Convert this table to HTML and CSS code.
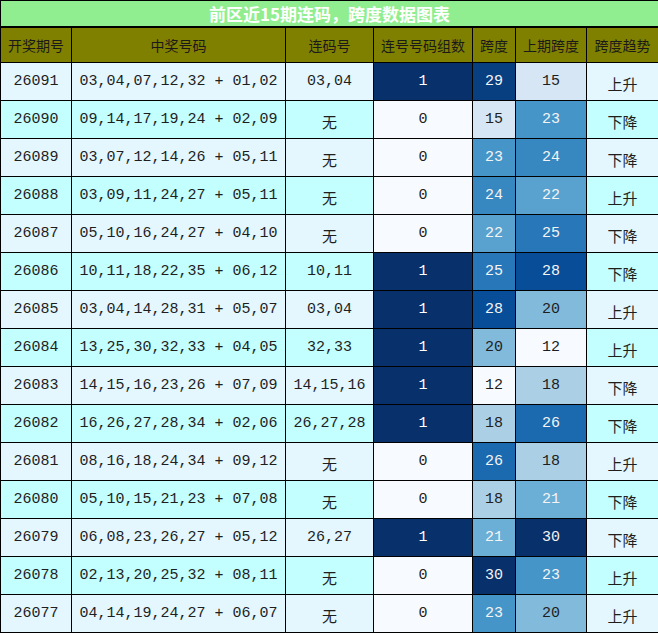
FILE: index.html
```html
<!DOCTYPE html>
<html lang="zh">
<head>
<meta charset="utf-8">
<title>前区近15期连码，跨度数据图表</title>
<link rel="stylesheet" href="styles.css">
</head>
<body>
<table class="chart">
  <colgroup>
    <col class="c-issue"><col class="c-nums"><col class="c-lian"><col class="c-groups"><col class="c-span"><col class="c-prev"><col class="c-trend">
  </colgroup>
  <thead>
    <tr><th class="title" colspan="7">前区近15期连码，跨度数据图表</th></tr>
    <tr class="head">
      <th>开奖期号</th><th>中奖号码</th><th>连码号</th><th>连号号码组数</th><th>跨度</th><th>上期跨度</th><th>跨度趋势</th>
    </tr>
  </thead>
  <tbody>
    <tr class="r-a"><td>26091</td><td>03,04,07,12,32 + 01,02</td><td>03,04</td><td class="g1">1</td><td class="h29">29</td><td class="h15">15</td><td class="cjk">上升</td></tr>
    <tr class="r-b"><td>26090</td><td>09,14,17,19,24 + 02,09</td><td class="cjk">无</td><td class="g0">0</td><td class="h15">15</td><td class="h23">23</td><td class="cjk">下降</td></tr>
    <tr class="r-a"><td>26089</td><td>03,07,12,14,26 + 05,11</td><td class="cjk">无</td><td class="g0">0</td><td class="h23">23</td><td class="h24">24</td><td class="cjk">下降</td></tr>
    <tr class="r-b"><td>26088</td><td>03,09,11,24,27 + 05,11</td><td class="cjk">无</td><td class="g0">0</td><td class="h24">24</td><td class="h22">22</td><td class="cjk">上升</td></tr>
    <tr class="r-a"><td>26087</td><td>05,10,16,24,27 + 04,10</td><td class="cjk">无</td><td class="g0">0</td><td class="h22">22</td><td class="h25">25</td><td class="cjk">下降</td></tr>
    <tr class="r-b"><td>26086</td><td>10,11,18,22,35 + 06,12</td><td>10,11</td><td class="g1">1</td><td class="h25">25</td><td class="h28">28</td><td class="cjk">下降</td></tr>
    <tr class="r-a"><td>26085</td><td>03,04,14,28,31 + 05,07</td><td>03,04</td><td class="g1">1</td><td class="h28">28</td><td class="h20">20</td><td class="cjk">上升</td></tr>
    <tr class="r-b"><td>26084</td><td>13,25,30,32,33 + 04,05</td><td>32,33</td><td class="g1">1</td><td class="h20">20</td><td class="h12">12</td><td class="cjk">上升</td></tr>
    <tr class="r-a"><td>26083</td><td>14,15,16,23,26 + 07,09</td><td>14,15,16</td><td class="g1">1</td><td class="h12">12</td><td class="h18">18</td><td class="cjk">下降</td></tr>
    <tr class="r-b"><td>26082</td><td>16,26,27,28,34 + 02,06</td><td>26,27,28</td><td class="g1">1</td><td class="h18">18</td><td class="h26">26</td><td class="cjk">下降</td></tr>
    <tr class="r-a"><td>26081</td><td>08,16,18,24,34 + 09,12</td><td class="cjk">无</td><td class="g0">0</td><td class="h26">26</td><td class="h18">18</td><td class="cjk">上升</td></tr>
    <tr class="r-b"><td>26080</td><td>05,10,15,21,23 + 07,08</td><td class="cjk">无</td><td class="g0">0</td><td class="h18">18</td><td class="h21">21</td><td class="cjk">下降</td></tr>
    <tr class="r-a"><td>26079</td><td>06,08,23,26,27 + 05,12</td><td>26,27</td><td class="g1">1</td><td class="h21">21</td><td class="h30">30</td><td class="cjk">下降</td></tr>
    <tr class="r-b"><td>26078</td><td>02,13,20,25,32 + 08,11</td><td class="cjk">无</td><td class="g0">0</td><td class="h30">30</td><td class="h23">23</td><td class="cjk">上升</td></tr>
    <tr class="r-a"><td>26077</td><td>04,14,19,24,27 + 06,07</td><td class="cjk">无</td><td class="g0">0</td><td class="h23">23</td><td class="h20">20</td><td class="cjk">上升</td></tr>
  </tbody>
</table>
</body>
</html>
```

FILE: styles.css
```css
html, body {
  margin: 0;
  padding: 0;
  background: #ffffff;
}

.chart {
  width: 658px;
  border-collapse: collapse;
  table-layout: fixed;
  font-family: "Liberation Mono", "Noto Sans CJK SC", monospace;
  font-size: 15px;
  color: #1e1e1e;
}

.c-issue { width: 71px; }
.c-nums { width: 214px; }
.c-lian { width: 88px; }
.c-groups { width: 99px; }
.c-span { width: 43px; }
.c-prev { width: 71px; }
.c-trend { width: 72px; }

.chart th,
.chart td {
  border: 1px solid #000000;
  padding: 0;
  text-align: center;
  vertical-align: middle;
  white-space: nowrap;
  overflow: hidden;
}

.title {
  height: 25px;
  background: #90ee90;
  color: #ffffff;
  font-family: "Noto Sans CJK SC", "Liberation Sans", sans-serif;
  font-size: 17px;
  font-weight: bold;
  line-height: 24px;
  border-bottom: 2px solid #000000 !important;
}

.head th {
  height: 34px;
  background: #808000;
  color: #1a1a1a;
  font-family: "Noto Sans CJK SC", sans-serif;
  font-size: 14px;
  font-weight: normal;
}

.chart tbody td {
  height: 37px;
}

.r-a td { background: #e4f7ff; }
.r-b td { background: #c4ffff; }

.chart tbody td.cjk {
  font-family: "Noto Sans CJK SC", sans-serif;
  font-size: 15px;
  height: 34px;
  padding-top: 3px;
}

/* 连号号码组数 */
.chart td.g1 { background: #08306b; color: #ffffff; }
.chart td.g0 { background: #f7fbff; color: #1e1e1e; }

/* Blues scale 12..30 */
.chart td.h12 { background: #f7fbff; color: #1e1e1e; }
.chart td.h15 { background: #d6e6f4; color: #1e1e1e; }
.chart td.h18 { background: #abd0e6; color: #1e1e1e; }
.chart td.h20 { background: #82badb; color: #1e1e1e; }
.chart td.h21 { background: #6baed6; color: #f4f4f4; }
.chart td.h22 { background: #59a2cf; color: #f4f4f4; }
.chart td.h23 { background: #4695c8; color: #f4f4f4; }
.chart td.h24 { background: #3787c0; color: #f4f4f4; }
.chart td.h25 { background: #2878b9; color: #f4f4f4; }
.chart td.h26 { background: #1b6aaf; color: #f4f4f4; }
.chart td.h28 { background: #084d97; color: #f4f4f4; }
.chart td.h29 { background: #083f81; color: #f4f4f4; }
.chart td.h30 { background: #08306b; color: #f4f4f4; }
```
